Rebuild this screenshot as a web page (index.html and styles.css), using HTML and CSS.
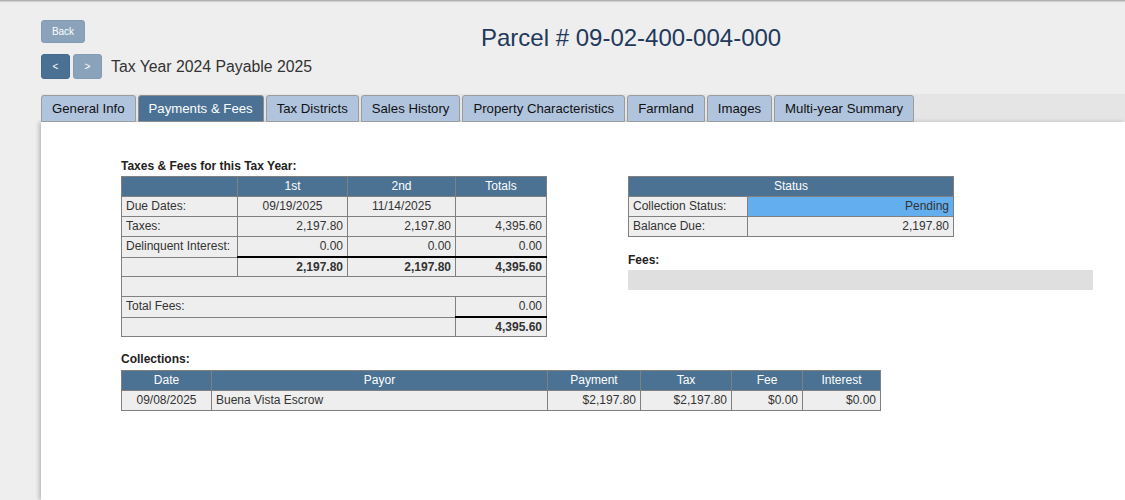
FILE: index.html
```html
<!DOCTYPE html>
<html lang="en">
<head>
<meta charset="utf-8">
<title>Parcel # 09-02-400-004-000</title>
<link rel="stylesheet" href="styles.css">
</head>
<body>
<div class="page">
  <header class="top">
    <div class="nav-col">
      <button class="btn back" type="button">Back</button>
      <div class="year-row">
        <button class="btn nav dark" type="button">&lt;</button>
        <button class="btn nav" type="button">&gt;</button>
        <span class="year">Tax Year 2024 Payable 2025</span>
      </div>
    </div>
    <h1 class="parcel">Parcel # 09-02-400-004-000</h1>
  </header>

  <nav class="tabs">
    <span class="tab">General Info</span>
    <span class="tab active">Payments &amp; Fees</span>
    <span class="tab">Tax Districts</span>
    <span class="tab">Sales History</span>
    <span class="tab">Property Characteristics</span>
    <span class="tab">Farmland</span>
    <span class="tab">Images</span>
    <span class="tab">Multi-year Summary</span>
  </nav>

  <main class="panel">
    <div class="top-row">
      <section class="taxes">
        <h2 class="label">Taxes &amp; Fees for this Tax Year:</h2>
        <table class="grid taxes-table">
          <colgroup><col class="c1"><col class="c2"><col class="c3"><col class="c4"></colgroup>
          <tr><th></th><th>1st</th><th>2nd</th><th>Totals</th></tr>
          <tr><td>Due Dates:</td><td class="ctr">09/19/2025</td><td class="ctr">11/14/2025</td><td></td></tr>
          <tr><td>Taxes:</td><td class="num">2,197.80</td><td class="num">2,197.80</td><td class="num">4,395.60</td></tr>
          <tr><td>Delinquent Interest:</td><td class="num">0.00</td><td class="num">0.00</td><td class="num">0.00</td></tr>
          <tr class="sum"><td></td><td class="num b thick">2,197.80</td><td class="num b thick">2,197.80</td><td class="num b thick">4,395.60</td></tr>
          <tr><td colspan="4">&nbsp;</td></tr>
          <tr><td colspan="3">Total Fees:</td><td class="num">0.00</td></tr>
          <tr class="sum"><td colspan="3"></td><td class="num b thick">4,395.60</td></tr>
        </table>
      </section>

      <section class="status">
        <table class="grid status-table">
          <colgroup><col class="s1"><col class="s2"></colgroup>
          <tr><th colspan="2">Status</th></tr>
          <tr><td>Collection Status:</td><td class="num pending">Pending</td></tr>
          <tr><td>Balance Due:</td><td class="num">2,197.80</td></tr>
        </table>
        <h2 class="label fees-label">Fees:</h2>
        <div class="fees-bar"></div>
      </section>
    </div>

    <section class="collections">
      <h2 class="label coll-label">Collections:</h2>
      <table class="grid coll-table">
        <colgroup><col class="k1"><col class="k2"><col class="k3"><col class="k4"><col class="k5"><col class="k6"></colgroup>
        <tr><th>Date</th><th>Payor</th><th>Payment</th><th>Tax</th><th>Fee</th><th>Interest</th></tr>
        <tr><td class="ctr">09/08/2025</td><td>Buena Vista Escrow</td><td class="num">$2,197.80</td><td class="num">$2,197.80</td><td class="num">$0.00</td><td class="num">$0.00</td></tr>
      </table>
    </section>
  </main>
</div>
</body>
</html>
```

FILE: styles.css
```css
html, body {
  margin: 0;
  padding: 0;
}

body {
  background: #eeeeee;
  font-family: "Liberation Sans", Arial, sans-serif;
  color: #333333;
}

.page {
  min-height: 500px;
  background: linear-gradient(to bottom, #9c9c9c 0, #c4c4c4 1px, #e2e2e2 2px, #eeeeee 3px) no-repeat;
  background-size: 100% 3px;
  overflow: hidden;
}

/* header */
.top {
  display: flex;
  padding: 20px 0 0 41px;
}

.nav-col {
  width: 440px;
  flex: none;
}

.btn {
  display: block;
  margin: 0;
  padding: 0;
  border: 1px solid #839cb5;
  border-radius: 3px;
  background: #8aa3bb;
  color: #ffffff;
  font-family: "Liberation Sans", Arial, sans-serif;
  cursor: pointer;
}

.back {
  width: 44px;
  height: 23px;
  font-size: 10px;
}

.year-row {
  display: flex;
  align-items: center;
  gap: 3px;
  margin-top: 11px;
}

.nav {
  width: 29px;
  height: 25px;
  font-size: 10px;
}

.nav.dark {
  background: #4a7194;
  border-color: #446a8c;
}

.year {
  margin-left: 6px;
  font-size: 15.8px;
  color: #333333;
}

.parcel {
  margin: 4px 0 0;
  font-size: 24px;
  line-height: 28px;
  font-weight: normal;
  color: #22395c;
}

/* tabs */
.tabs {
  display: flex;
  gap: 2px;
  margin: 15px 0 0 41px;
  padding-top: 1px;
  background: #e5e5e5;
}

.tab {
  padding: 0 10px;
  border: 1px solid #9c9c9c;
  border-radius: 3px 3px 0 0;
  background: #b0c4de;
  color: #111111;
  font-size: 13.2px;
  line-height: 25px;
  white-space: nowrap;
}

.tab.active {
  background: #4b7294;
  border-color: #8d8d8d;
  color: #ffffff;
}

/* panel */
.panel {
  margin-left: 41px;
  min-height: 378px;
  box-sizing: border-box;
  padding: 37px 30px 40px 80px;
  background: #ffffff;
  box-shadow: -2px 0 4px rgba(0, 0, 0, 0.22);
}

.top-row {
  display: flex;
  gap: 82px;
}

.label {
  margin: 0 0 3px;
  font-size: 12px;
  line-height: 14px;
  font-weight: bold;
  color: #222222;
}

.taxes {
  width: 425px;
  flex: none;
}

.status {
  width: 465px;
  flex: none;
  padding-top: 17px;
}

/* tables */
.grid {
  border-collapse: collapse;
  table-layout: fixed;
  font-size: 12px;
  line-height: 19px;
}

.grid th,
.grid td {
  padding: 0 4px;
  border: 1px solid #808080;
  white-space: nowrap;
  overflow: hidden;
}

.grid th {
  background: #4b7293;
  color: #ffffff;
  font-weight: normal;
  text-align: center;
}

.grid td {
  background: #eeeeee;
  color: #333333;
  text-align: left;
}

.grid td.num {
  text-align: right;
}

.grid td.ctr {
  text-align: center;
}

.grid td.b {
  font-weight: bold;
}

.grid td.thick {
  border-top: 2px solid #000000;
}

.grid tr.sum td {
  line-height: 18px;
}

.taxes-table {
  width: 425px;
}

.c1 { width: 116px; }
.c2 { width: 110px; }
.c3 { width: 108px; }
.c4 { width: 91px; }

.status-table {
  width: 325px;
}

.s1 { width: 119px; }
.s2 { width: 206px; }

.grid td.pending {
  background: #63aeee;
}

.fees-label {
  margin-top: 16px;
}

.fees-bar {
  height: 20px;
  width: 465px;
  background: #dfdfdf;
}

.collections {
  margin-top: 15px;
}

.coll-label {
  margin-bottom: 4px;
}

.coll-table {
  width: 759px;
}

.k1 { width: 90px; }
.k2 { width: 336px; }
.k3 { width: 93px; }
.k4 { width: 91px; }
.k5 { width: 71px; }
.k6 { width: 78px; }
```
